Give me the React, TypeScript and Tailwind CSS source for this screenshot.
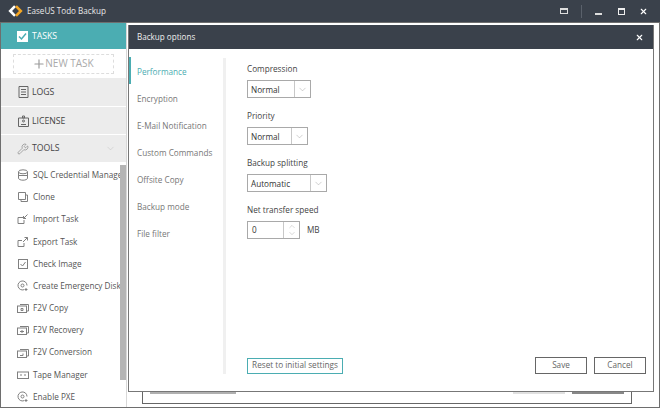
import React from "react";
import { ChevronDown, ChevronUp, Wrench, X, Plus } from "lucide-react";

const Ic = ({ d }: { d: React.ReactNode }) => (
  <svg width="12" height="12" viewBox="0 0 12 12" fill="none" stroke="#808080" strokeWidth="1">{d}</svg>
);
const disk = <><path d="M10 5.500a4.500 4.500 0 1 0-3 4.200" /><circle cx="5.500" cy="5.500" r="1.500" /><path d="M9 8v3M7.500 9.500h3" /></>;
const vm = (x: React.ReactNode) => <><path d="M3 2.500h8.500v6.500H10" /><rect x="0.500" y="4" width="9" height="6.500" />{x}</>;
const tools: [string, React.ReactNode][] = [
  ["SQL Credential Manager", <Ic d={<><ellipse cx="6" cy="2.800" rx="4.500" ry="2" /><path d="M1.500 2.800v6.400c0 1.100 2 2 4.500 2s4.500-.9 4.500-2V2.800M1.500 6.500h9" /></>} />],
  ["Clone", <Ic d={<><path d="M1.500 1.500h7v7h-7z" /><path d="M4 8.500v2h6.500V4h-2" /></>} />],
  ["Import Task", <Ic d={<><path d="M1 4.500h5M1 4.500v6h6V7" /><path d="M10.500 1.500 6.500 5.500M6.500 3v2.500H9" /></>} />],
  ["Export Task", <Ic d={<><path d="M1 4.500h4M1 4.500v6h6V7" /><path d="M6 6l4.500-4.500M7.500 1.500h3v3" /></>} />],
  ["Check Image", <Ic d={<><rect x="1.500" y="1.500" width="9" height="9" /><path d="M3.500 6 5.500 8 8.500 4" /></>} />],
  ["Create Emergency Disk", <Ic d={disk} />],
  ["F2V Copy", <Ic d={vm(<path d="M4 6.500h2v2H4z" />)} />],
  ["F2V Recovery", <Ic d={vm(<path d="M3 7.500h4M5 6v3" />)} />],
  ["F2V Conversion", <Ic d={vm(<path d="M3 8.500h3V6.500" />)} />],
  ["Tape Manager", <Ic d={<><rect x="0.500" y="3" width="11" height="6.500" /><path d="M3 6h2M7 6h2" /></>} />],
  ["Enable PXE", <Ic d={disk} />],
];
const tabs = ["Encryption", "E-Mail Notification", "Custom Commands", "Offsite Copy", "Backup mode", "File filter"];

const Select = ({ value, w }: { value: string; w: string }) => (
  <div className={`flex h-[18px] border border-[#a9a9a9] bg-white ${w}`}>
    <div className="flex-1 pl-[3px] leading-[17px] text-[#333]">{value}</div>
    <div className="flex w-[16px] items-center justify-center border-l border-[#c8c8c8]">
      <ChevronDown size={11} color="#999" strokeWidth={1} />
    </div>
  </div>
);

const Side = ({ icon, label, h }: { icon: React.ReactNode; label: string; h: string }) => (
  <div className={`flex items-center gap-[3px] bg-[#ececec] pl-[16px] text-[8.700px] text-[#444] ${h}`}>
    <span className="flex w-[12px] justify-center">{icon}</span>
    <span className="pt-[2px]">{label}</span>
  </div>
);

export default function App() {
  return (
    <div className="relative flex h-[408px] w-[660px] flex-col overflow-hidden bg-[#6e6e6e] font-['Open_Sans',sans-serif] text-[8.200px]">
      <div className="flex h-[22px] shrink-0 items-center bg-[#3a414b] pl-[8px] pr-[12px] text-[8.100px] text-[#e8e8e8]">
        <svg width="15" height="12" viewBox="0 0 15 12" fill="none" strokeWidth="2.600">
          <path d="M7 1.200 2.200 6 7 10.800" stroke="#fff" />
          <path d="M8 1.200 12.800 6 8 10.800" stroke="#f5a623" />
        </svg>
        <span className="ml-[4px]">EaseUS Todo Backup</span>
        <div className="ml-auto flex items-center">
          <span className="mr-[13px] h-[6px] w-[8px] border-x border-b border-t-[2px] border-[#ddd]" />
          <span className="mr-[13px] h-[13px] w-px bg-[#5a616b]" />
          <span className="mr-[16px] mt-[5px] h-[2px] w-[7px] bg-[#ddd]" />
          <span className="mr-[14px] h-[7px] w-[7px] border border-t-[2px] border-[#eee]" />
          <X size={9} color="#fff" strokeWidth={3} />
        </div>
      </div>

      <div className="mt-px flex min-h-0 flex-1 pb-px pl-px pr-px">
        <div className="flex w-[126px] shrink-0 flex-col overflow-hidden border-r border-[#d8d8d8] bg-white">
          <div className="flex h-[26px] shrink-0 items-center gap-[4px] bg-[#4badb2] pl-[16px] text-[8.700px] text-white">
            <span className="flex h-[11px] w-[11px] items-center justify-center bg-white">
              <svg width="9" height="9" viewBox="0 0 9 9" fill="none" stroke="#4badb2" strokeWidth="1.500"><path d="M1 4.500 3.500 7 8 1.500" /></svg>
            </span>
            <span className="pt-[2px]">TASKS</span>
          </div>
          <div className="flex h-[29px] shrink-0 items-center justify-center pr-[1px]">
            <div className="flex h-[20px] w-[101px] items-center justify-center border border-dashed border-[#ddd] text-[10px] text-[#aaa]">
              <Plus size={14} color="#999" strokeWidth={2} className="-mr-[1px]" />
              <span>NEW TASK</span>
            </div>
          </div>
          <div className="flex shrink-0 flex-col gap-[1px]">
            <Side h="h-[28px]" icon={<svg width="11" height="12" viewBox="0 0 11 12" fill="none" stroke="#666"><path d="M1 .5h9v11H1zM3 3.500h5M3 6h5M3 8.500h5" /></svg>} label="LOGS" />
            <Side h="h-[27px]" icon={<svg width="11" height="12" viewBox="0 0 11 12" fill="none" stroke="#666"><path d="M.5 3h10v8.500H.5z" /><circle cx="5.500" cy="6" r="1" /><path d="M3 9.500h5M4.500 1h2v2h-2z" /></svg>} label="LICENSE" />
            <div className="flex h-[27px] items-center gap-[3px] bg-[#ececec] pl-[16px] pr-[10px] text-[8.700px] text-[#444]">
              <Wrench size={12} color="#777" strokeWidth={1.200} className="w-[12px]" />
              <span>TOOLS</span>
              <ChevronDown size={11} color="#bbb" strokeWidth={1} className="ml-auto" />
            </div>
          </div>
          <div className="flex min-h-0 flex-1">
            <div className="min-w-0 flex-1 overflow-hidden pt-[2px]">
              {tools.map(([t, ic]) => (
                <div key={t} className="flex h-[22.200px] items-center pl-[16px] text-[#555]">
                  <span className="flex w-[16px] shrink-0">{ic}</span>
                  <span className="whitespace-nowrap">{t}</span>
                </div>
              ))}
            </div>
            <div className="w-[6px] shrink-0 pb-[27px] pt-[3px]"><div className="h-full bg-[#b4b4b4]" /></div>
          </div>
        </div>
        <div className="relative flex-1 bg-white">
          <div className="absolute bottom-[3px] left-[15px] right-[27px] top-[10px] border border-[#666]">
            <div className="absolute bottom-[9px] left-[7px] h-[2px] w-[86px] bg-[#b0b0b0]" />
            <div className="absolute bottom-[9px] right-[7px] h-[2px] w-[52px] bg-[#888]" />
            <div className="absolute bottom-[9px] right-[66px] h-[2px] w-[52px] bg-[#e0e0e0]" />
          </div>
        </div>
      </div>

      <div className="absolute left-[128px] top-[25px] flex h-[367px] w-[526px] flex-col border-x border-b border-[#777] bg-white">
        <div className="flex h-[24px] shrink-0 items-center justify-between bg-[#3a414b] pl-[8px] pr-[9px] text-[8.100px] text-[#eee]">
          <span>Backup options</span>
          <X size={9} color="#fff" strokeWidth={3} />
        </div>
        <div className="flex min-h-0 flex-1 pb-[17px]">
          <div className="w-[94px] shrink-0 pt-[8px] text-[#777]">
            <div className="flex h-[27px] items-center border-l-[2px] border-[#4badb2] pl-[6px] pt-[3px] text-[#4badb2]">Performance</div>
            {tabs.map((t) => (
              <div key={t} className="flex h-[27px] items-center whitespace-nowrap pl-[8px] pt-[3px]">{t}</div>
            ))}
          </div>
          <div className="mt-[9px] w-[3px] shrink-0 bg-[#f0f0f0]" />
          <div className="flex flex-1 flex-col pl-[21px] pr-[7px] pt-[14px] text-[#444]">
            <div className="leading-[12px]">Compression</div>
            <div className="mt-[5px]"><Select value="Normal" w="w-[64px]" /></div>
            <div className="mt-[12px] leading-[12px]">Priority</div>
            <div className="mt-[5px]"><Select value="Normal" w="w-[61px]" /></div>
            <div className="mt-[12px] leading-[12px]">Backup splitting</div>
            <div className="mt-[5px]"><Select value="Automatic" w="w-[80px]" /></div>
            <div className="mt-[12px] leading-[12px]">Net transfer speed</div>
            <div className="mt-[5px] flex items-center">
              <div className="flex h-[18px] w-[53px] border border-[#a9a9a9]">
                <div className="flex-1 pl-[4px] leading-[16px] text-[#333]">0</div>
                <div className="flex w-[16px] flex-col items-center justify-center border-l border-[#c8c8c8]">
                  <ChevronUp size={10} color="#999" strokeWidth={1} className="-mb-[2px]" />
                  <ChevronDown size={10} color="#999" strokeWidth={1} />
                </div>
              </div>
              <span className="ml-[7px]">MB</span>
            </div>
            <div className="mt-auto flex items-center justify-between">
              <div className="flex h-[16px] w-[96px] items-center justify-center border border-[#4badb2] text-[#666]">Reset to initial settings</div>
              <div className="flex gap-[7px] text-[#666]">
                <div className="flex h-[17px] w-[52px] items-center justify-center border border-[#666]">Save</div>
                <div className="flex h-[17px] w-[52px] items-center justify-center border border-[#666]">Cancel</div>
              </div>
            </div>
          </div>
        </div>
      </div>
    </div>
  );
}
